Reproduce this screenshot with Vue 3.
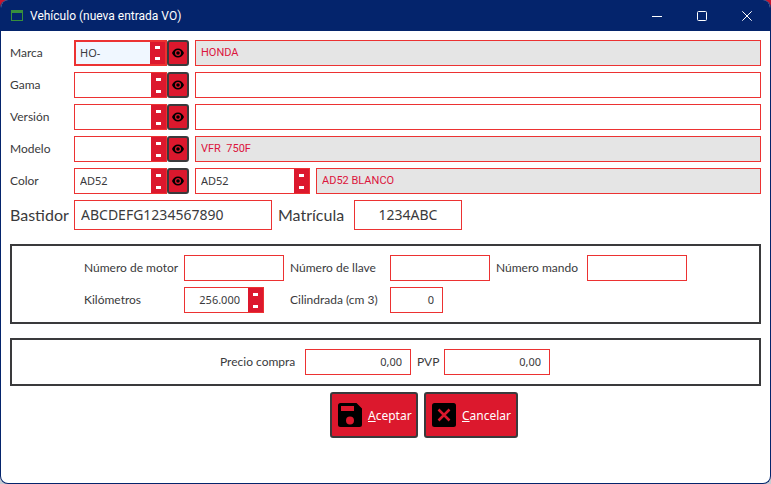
<script setup>
import { reactive } from 'vue'

const lookups = reactive([
  { id: 'marca', label: 'Marca', code: 'HO-', text: 'HONDA', readonly: true, active: true },
  { id: 'gama', label: 'Gama', code: '', text: '', readonly: false },
  { id: 'version', label: 'Versión', code: '', text: '', readonly: false },
  { id: 'modelo', label: 'Modelo', code: '', text: 'VFR  750F', readonly: true },
  { id: 'color', label: 'Color', code: 'AD52', second: 'AD52', text: 'AD52 BLANCO', readonly: true }
])

const form = reactive({
  bastidor: 'ABCDEFG1234567890',
  matricula: '1234ABC',
  motor: '',
  llave: '',
  mando: '',
  km: '256.000',
  cilindrada: '0',
  compra: '0,00',
  pvp: '0,00'
})
</script>

<template>
  <div class="window">
    <header class="titlebar">
      <svg class="app-icon" viewBox="0 0 12 11" aria-hidden="true">
        <path d="M0 0h12v11H0z M1 3v7h10V3z" fill="#388e3c" fill-rule="evenodd" />
      </svg>
      <h1>Vehículo (nueva entrada VO)</h1>
      <button class="win-btn" type="button" aria-label="Minimizar">
        <svg viewBox="0 0 10 10"><path d="M0 5.5h10" /></svg>
      </button>
      <button class="win-btn" type="button" aria-label="Maximizar">
        <svg viewBox="0 0 10 10"><rect x=".5" y=".5" width="9" height="9" rx="1" /></svg>
      </button>
      <button class="win-btn" type="button" aria-label="Cerrar">
        <svg viewBox="0 0 10 10"><path d="M.3.3l9.4 9.4M9.7.3L.3 9.7" /></svg>
      </button>
    </header>

    <form class="content" @submit.prevent>
      <div v-for="row in lookups" :key="row.id" class="row">
        <label class="row-label" :for="row.id">{{ row.label }}</label>
        <div class="code">
          <div class="spin" :class="{ active: row.active }">
            <input :id="row.id" v-model="row.code" type="text" />
            <span class="steps">
              <button type="button" aria-label="Anterior"></button>
              <button type="button" aria-label="Siguiente"></button>
            </span>
          </div>
          <button class="eye" type="button" :aria-label="'Ver ' + row.label">
            <svg viewBox="0 0 24 20">
              <path fill-rule="evenodd" d="M12 1C6.500 1 2 5 0 10 2 15 6.500 19 12 19s10-4 12-9C22 5 17.500 1 12 1zm0 15a6 6 0 1 1 0-12 6 6 0 0 1 0 12z" />
              <circle cx="12" cy="10" r="3.600" />
            </svg>
          </button>
        </div>
        <div v-if="row.second" class="spin second">
          <input v-model="row.second" type="text" aria-label="Segundo color" />
          <span class="steps">
            <button type="button" aria-label="Anterior"></button>
            <button type="button" aria-label="Siguiente"></button>
          </span>
        </div>
        <input v-model="row.text" class="field desc" type="text" :readonly="row.readonly" :aria-label="'Descripción de ' + row.label" />
      </div>

      <div class="row large">
        <label class="row-label" for="bastidor">Bastidor</label>
        <input id="bastidor" v-model="form.bastidor" class="field bastidor" type="text" />
        <label class="plate-label" for="matricula">Matrícula</label>
        <input id="matricula" v-model="form.matricula" class="field matricula" type="text" />
      </div>

      <section class="panel details">
        <label for="motor">Número de motor</label>
        <input id="motor" v-model="form.motor" class="field" type="text" />
        <label for="llave">Número de llave</label>
        <input id="llave" v-model="form.llave" class="field" type="text" />
        <label for="mando">Número mando</label>
        <input id="mando" v-model="form.mando" class="field" type="text" />
        <label for="km">Kilómetros</label>
        <div class="spin km">
          <input id="km" v-model="form.km" class="number" type="text" />
          <span class="steps">
            <button type="button" aria-label="Aumentar"></button>
            <button type="button" aria-label="Disminuir"></button>
          </span>
        </div>
        <label for="cilindrada">Cilindrada (cm 3)</label>
        <input id="cilindrada" v-model="form.cilindrada" class="field number cc" type="text" />
      </section>

      <section class="panel prices">
        <label class="buy-label" for="compra">Precio compra</label>
        <input id="compra" v-model="form.compra" class="field number" type="text" />
        <label class="pvp-label" for="pvp">PVP</label>
        <input id="pvp" v-model="form.pvp" class="field number" type="text" />
      </section>

      <div class="actions">
        <button class="action accept" type="submit">
          <svg viewBox="0 0 24 24">
            <path fill-rule="evenodd" d="M2.500 0H18.500L24 5.500V21.500Q24 24 21.500 24H2.500Q0 24 0 21.500V2.500Q0 0 2.500 0zM3 3v5h13V3zM12 13.500a4 4 0 1 0 0 8 4 4 0 0 0 0-8z" />
          </svg>
          <span><u>A</u>ceptar</span>
        </button>
        <button class="action cancel" type="button">
          <svg viewBox="0 0 24 24">
            <rect width="24" height="24" rx="2.500" />
            <path class="cross" d="M6.500 6.500l11 11M17.500 6.500l-11 11" />
          </svg>
          <span><u>C</u>ancelar</span>
        </button>
      </div>
    </form>
  </div>
</template>

<style>
body {
  background: linear-gradient(#c8152d 50%, #c9ccd3 50%);
}
</style>

<style scoped>
* {
  box-sizing: border-box;
}
.window {
  min-height: 100vh;
  border: 1px solid #04246c;
  border-top: 0;
  border-radius: 8px;
  overflow: hidden;
  background: #fff;
  color: #3a3a3c;
  font: 12px "Noto Sans", sans-serif;
}
button,
input {
  font: inherit;
  color: inherit;
  margin: 0;
  padding: 0;
  border: 0;
  border-radius: 0;
  outline: 0;
}
.titlebar {
  display: flex;
  align-items: center;
  height: 31px;
  padding: 0 1px 0 10px;
  background: #04246c;
  color: #fff;
}
.app-icon {
  width: 12px;
  height: 11px;
  margin-right: 7px;
}
h1 {
  flex: 1;
  margin: 0;
  font-family: Roboto, sans-serif;
  font-size: 12px;
  font-weight: 400;
}
.win-btn {
  display: grid;
  place-items: center;
  width: 45px;
  height: 31px;
  background: none;
}
.win-btn svg {
  width: 10px;
  height: 10px;
  fill: none;
  stroke: #fff;
}
.content {
  display: flex;
  flex-direction: column;
  gap: 6px;
  padding: 9px;
}
label {
  padding-bottom: 2px;
  font-family: "Century Gothic", Lato, sans-serif;
  white-space: nowrap;
}
.row {
  display: flex;
  align-items: center;
  gap: 6px;
}
.row-label {
  width: 58px;
}
.code {
  display: flex;
  width: 115px;
}
.field,
.spin {
  height: 26px;
  border: 1px solid #ec3232;
  background: #fff;
  font-size: 11px;
}
.field {
  width: 100%;
  min-width: 0;
  padding: 0 5px 2px;
}
.spin {
  display: flex;
  flex: 1;
  min-width: 0;
}
.spin input {
  flex: 1;
  width: 0;
  padding: 0 0 2px 5px;
  background: none;
}
.spin.active {
  border-width: 2px;
  background: #f0f7ff;
}
.spin.active input {
  padding-left: 4px;
}
.steps {
  display: flex;
  flex-direction: column;
  align-items: center;
  justify-content: center;
  gap: 9px;
  width: 15px;
  padding-top: 1px;
  background: #dc182d;
}
.steps button {
  width: 5px;
  height: 3px;
  background: #fff;
}
.active .steps {
  gap: 8px;
  padding-top: 0;
}
.eye {
  display: grid;
  place-items: center;
  width: 22px;
  height: 26px;
  border: 2px solid #3a3a3c;
  border-radius: 3px;
  background: #dc182d;
}
.eye svg {
  width: 12px;
  height: 10px;
}
.second {
  flex: none;
  width: 115px;
}
.desc {
  flex: 1;
}
.field:read-only {
  background: #e5e5e5;
  color: #dc143c;
  font-family: Roboto, sans-serif;
}
.large label {
  font-size: 16px;
}
.large .field {
  height: 30px;
  padding: 0 6px 2px;
  font-size: 14px;
}
.large .bastidor {
  width: 198px;
}
.plate-label {
  width: 70px;
}
.large .matricula {
  width: 108px;
  text-align: center;
}
.panel {
  border: 2px solid #3a3a3c;
  padding: 9px;
  align-items: center;
  justify-content: center;
  gap: 6px;
}
.details {
  display: grid;
  grid-template-columns: 94px 100px 94px 100px 85px 100px;
  margin-top: 8px;
}
.number {
  text-align: right;
}
.spin .number,
.field.number {
  padding-right: 8px;
}
.km {
  width: 80px;
}
.cc {
  width: 53px;
}
.prices {
  display: flex;
  margin-top: 8px;
  padding-right: 10px;
}
.prices .field {
  width: 106px;
}
.buy-label {
  width: 79px;
}
.pvp-label {
  width: 21px;
}
.actions {
  display: flex;
  justify-content: center;
  gap: 6px;
  padding-left: 77px;
}
.action {
  display: flex;
  align-items: center;
  gap: 6px;
  height: 46px;
  padding-left: 6px;
  border: 2px solid #3a3a3c;
  border-radius: 3px;
  background: #dc182d;
  color: #fff;
}
.action svg {
  width: 24px;
  height: 24px;
}
.accept {
  width: 88px;
}
.cancel {
  width: 94px;
}
.cross {
  stroke: #dc182d;
  stroke-width: 2.500;
}
</style>
